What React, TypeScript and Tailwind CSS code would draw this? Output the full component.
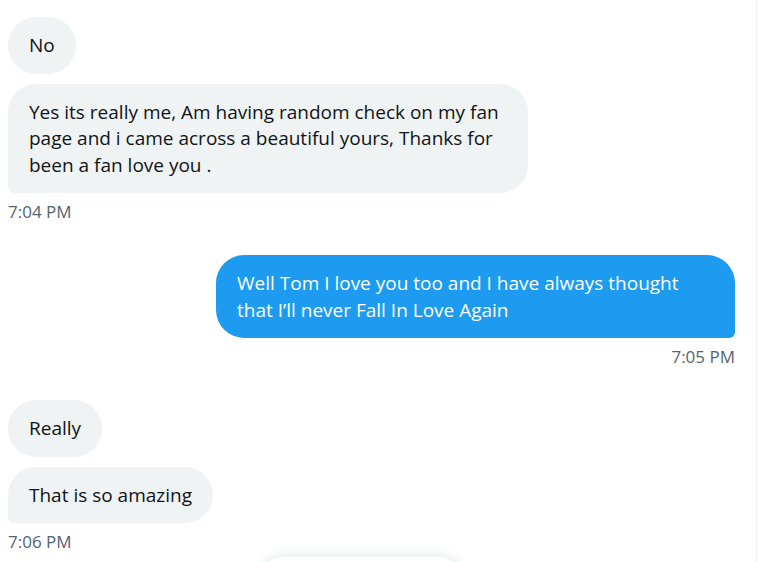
import React from "react";

const font = { fontFamily: '"Segoe UI", "Open Sans", "Noto Sans", sans-serif' };

function In({ children, className = "", tail = false }: { children: React.ReactNode; className?: string; tail?: boolean }) {
  return (
    <div className={"flex " + className}>
      <div
        className={
          "bg-[#eff3f4] text-[#0f1419] rounded-[28px] px-[21px] py-[15px] text-[19px] leading-[26.5px] " +
          (tail ? "rounded-bl-[6px]" : "")
        }
      >
        {children}
      </div>
    </div>
  );
}

export default function App() {
  return (
    <div className="w-[758px] h-[562px] overflow-hidden bg-white relative" style={font}>
      <div className="w-[757px] h-full border-r border-[#eff3f4] pl-[8px] pr-[21px] pt-[17px]">
        <In>No</In>
        <In className="mt-[10px]" tail>
          <div className="w-[478px]">
            Yes its really me, Am having random check on my fan page and i came across a beautiful yours, Thanks for been a fan love you .
          </div>
        </In>
        <div className="mt-[7px] text-[17px] leading-[24px] text-[#536471]">7:04 PM</div>

        <div className="flex justify-end mt-[31px]">
          <div className="bg-[#1d9bf0] text-white rounded-[28px] rounded-br-[6px] px-[21px] py-[15px] text-[19px] leading-[26.5px] w-[519px]">
            Well Tom I love you too and I have always thought that I’ll never Fall In Love Again
          </div>
        </div>
        <div className="mt-[7px] text-right text-[17px] leading-[24px] text-[#536471]">7:05 PM</div>

        <In className="mt-[31px]">Really</In>
        <In className="mt-[10px]" tail>That is so amazing</In>
        <div className="mt-[7px] text-[17px] leading-[24px] text-[#536471]">7:06 PM</div>
      </div>
      <div className="absolute left-[262px] top-[557px] w-[198px] h-[40px] rounded-full bg-white shadow-[0_0_12px_rgba(101,119,134,0.22)]" />
    </div>
  );
}
